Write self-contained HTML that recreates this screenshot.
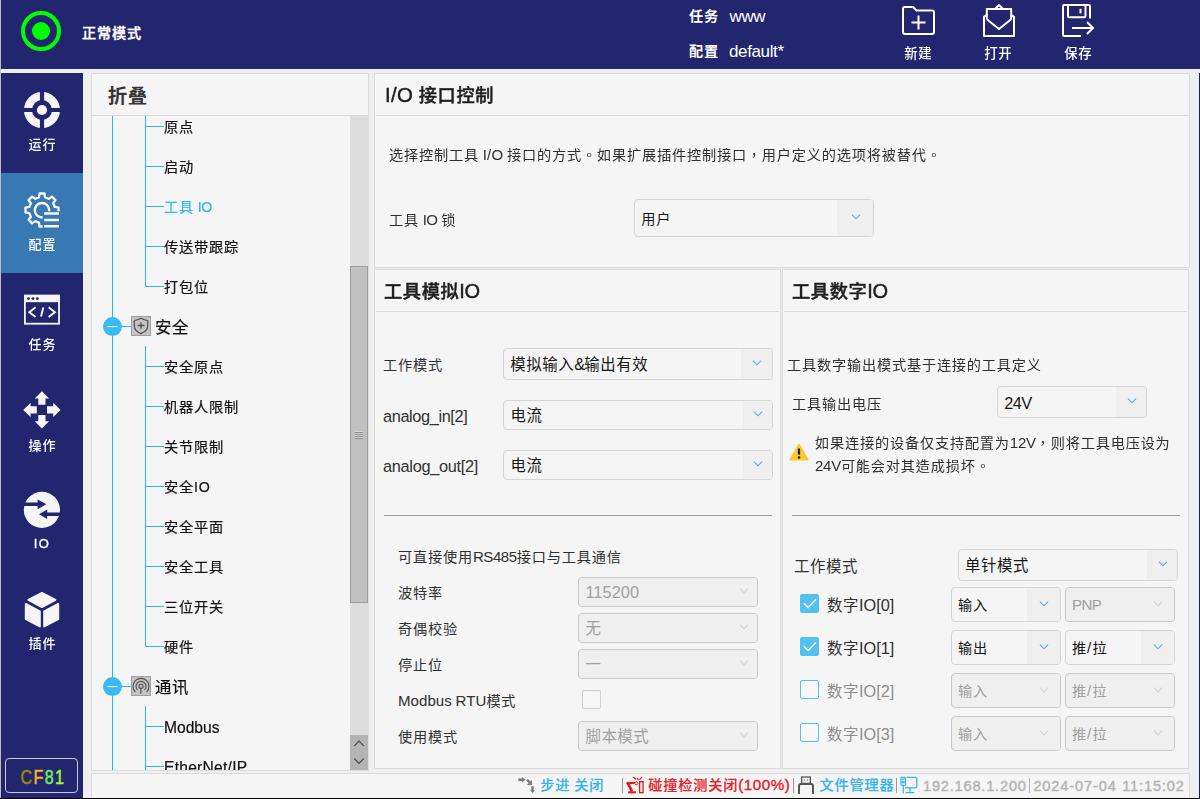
<!DOCTYPE html>
<html lang="zh-CN">
<head>
<meta charset="utf-8">
<title>I/O 接口控制</title>
<style>
*{box-sizing:border-box;margin:0;padding:0}
html,body{width:1200px;height:799px;overflow:hidden;background:#efefef}
body{position:relative;font-family:"Liberation Sans","Noto Sans CJK SC",sans-serif;color:#1c1c1c;font-size:15px}
.abs,.t,svg{position:absolute}
.t{white-space:nowrap;line-height:20px;height:20px}
.b{font-weight:bold}
.m{font-weight:500}
.w{color:#fff}
#top{left:0;top:0;width:1200px;height:69px;background:#21266f}
#side{left:1px;top:73px;width:82px;height:725px;background:#21266f}
#lstrip{left:0;top:0;width:1px;height:799px;background:#bdbdbd}
#rstrip{left:1199px;top:73px;width:1px;height:726px;background:#1a1d6c}
#bline{left:0;top:798px;width:1200px;height:1px;background:#000}
.panel{position:absolute;background:#f5f5f5;border:1px solid #dadada}
.hr{position:absolute;height:1px;background:#d9d9d9}
.nav{position:absolute;left:0;width:82px;height:100px}
.nav.sel{background:#3878b3}
.nav .t{left:0;width:82px;text-align:center;color:#fff;font-weight:500;font-size:13px;letter-spacing:1px;text-indent:1px;top:61.5px;will-change:transform}
.tl{position:absolute;background:#2cb5f1}
.ti{font-size:14.2px;letter-spacing:0.8px;left:164px;color:#111;-webkit-text-stroke:0.2px}
.lt{letter-spacing:-0.5px;margin-left:-1px}
.tg{font-size:16.4px;letter-spacing:0.6px;left:155px;line-height:22px;height:22px;color:#111;-webkit-text-stroke:0.2px}
.h{font-size:18.2px;letter-spacing:0.65px;font-weight:500;-webkit-text-stroke:0.45px;line-height:26px;height:26px;color:#1e1e1e}
.f11{font-size:14.2px;letter-spacing:0.8px;color:#303030}
.f12{font-size:15.4px;letter-spacing:0.6px;color:#303030}
.combo{position:absolute;border:1px solid #d5d5d5;border-radius:4px;background:#f5f5f5;overflow:hidden}
.combo .v{position:absolute;left:7px;top:50%;margin-top:-10.5px;line-height:22px;white-space:nowrap;color:#161616}
.c11{font-size:14.2px;letter-spacing:0.8px}
.c12{font-size:15.4px;letter-spacing:0.6px}
.combo .a{position:absolute;right:0;top:0;bottom:0;width:35px;background:#efefef}
.combo .a svg{left:50%;top:50%;margin:-3.8px 0 0 -4.3px}
.combo.dis{background:#efefef;border-color:#c8c8c8}
.combo.dis .v{color:#a0a0a0}
.cb{position:absolute;width:19px;height:19px;border:1px solid #55c1f2;border-radius:2px;background:#f7f7f7}
.cb.on{background:#55c1f2}
.cb.g{border-color:#cfcfcf}
.sb{font-size:14.2px;letter-spacing:0.8px;font-weight:500;-webkit-text-stroke:0.15px;line-height:20px}
.sn{font-size:14.6px;letter-spacing:0.75px;-webkit-text-stroke:0.4px;line-height:20px}
</style>
</head>
<body>
<div id="top" class="abs"></div>
<div id="lstrip" class="abs"></div>
<div id="side" class="abs"></div>
<div id="rstrip" class="abs"></div>
<svg style="left:19px;top:9px" width="44" height="44" viewBox="0 0 44 44"><circle cx="22" cy="22" r="18" fill="none" stroke="#00ff00" stroke-width="4"/><circle cx="22" cy="22" r="9" fill="#00ff00"/></svg>
<div class="t w m" style="left:82px;top:23.3px;font-size:14.2px;letter-spacing:0.8px;-webkit-text-stroke:0.35px;">正常模式</div>
<div class="t w b" style="left:689px;top:6px;font-size:14.2px;letter-spacing:0.8px;">任务</div>
<div class="t w" style="left:729.5px;top:7px;font-size:17px;letter-spacing:-0.4px;">www</div>
<div class="t w b" style="left:689px;top:41px;font-size:14.2px;letter-spacing:0.8px;">配置</div>
<div class="t w" style="left:729px;top:42px;font-size:17px;letter-spacing:-0.37px;">default*</div>
<svg style="left:901px;top:5px" width="35" height="31" viewBox="0 0 35 31"><path d="M3.5 2 H12 L15.5 5.5 H31 Q33 5.5 33 7.5 V27 Q33 29 31 29 H4 Q2 29 2 27 V3.5 Q2 2 3.5 2 Z" fill="none" stroke="#fff" stroke-width="2" stroke-linejoin="round"/><path d="M10.5 17.5 H24.5 M17.5 10.5 V24.5" stroke="#fff" stroke-width="2" fill="none"/></svg>
<div class="t w m" style="left:888px;width:60px;text-align:center;top:43.5px;font-size:13.4px;letter-spacing:0.6px;text-indent:0.6px;will-change:transform">新建</div>
<svg style="left:982px;top:3px" width="34" height="35" viewBox="0 0 34 35"><path d="M2 13.8 V33 H32 V13.8" fill="none" stroke="#fff" stroke-width="2" stroke-linejoin="round"/><path d="M2 13.8 L4.5 12 M32 13.8 L29.5 12" fill="none" stroke="#fff" stroke-width="2" stroke-linecap="round"/><path d="M4.8 16.3 L17 26 L29.2 16.3" fill="none" stroke="#fff" stroke-width="2" stroke-linejoin="round"/><path d="M4.8 16.5 V6 H29.2 V16.5" fill="none" stroke="#fff" stroke-width="2" stroke-linejoin="round"/><path d="M13 6 L17 2 L21 6" fill="none" stroke="#fff" stroke-width="2" stroke-linejoin="round"/></svg>
<div class="t w m" style="left:968px;width:60px;text-align:center;top:43.5px;font-size:13.4px;letter-spacing:0.6px;text-indent:0.6px;will-change:transform">打开</div>
<svg style="left:1061.2px;top:2.7px" width="35" height="35" viewBox="0 0 35 35"><path d="M20 33 H3 Q2 33 2 32 V3 Q2 2 3 2 H28 Q29 2 29 3 V15.5" fill="none" stroke="#fff" stroke-width="2" stroke-linejoin="round"/><path d="M7 2 V13 Q7 14.3 8.3 14.3 H23.2 Q24.5 14.3 24.5 13 V2" fill="none" stroke="#fff" stroke-width="2"/><path d="M19.5 5.8 V10.4" stroke="#fff" stroke-width="2"/><path d="M11 25 H32 M26 19 L32 25 L26 31" fill="none" stroke="#fff" stroke-width="2"/></svg>
<div class="t w m" style="left:1048px;width:60px;text-align:center;top:43.5px;font-size:13.4px;letter-spacing:0.6px;text-indent:0.6px;will-change:transform">保存</div>
<div id="sidein" class="abs" style="left:1px;top:73px;width:82px;height:725px">
<div class="nav" style="top:0px"><svg style="left:23px;top:19px" width="36" height="36" viewBox="0 0 36 36"><circle cx="18" cy="18" r="14" fill="none" stroke="#f5f5f5" stroke-width="8"/><circle cx="18" cy="18" r="5.1" fill="#f5f5f5"/><path d="M18 0 V10.5 M18 25.5 V36 M0 18 H10.5 M25.5 18 H36" stroke="#21266f" stroke-width="4.2"/></svg><div class="t">运行</div></div>
<div class="nav sel" style="top:100px"><svg style="left:21px;top:17px" width="40" height="40" viewBox="0 0 40 40"><defs><clipPath id="gc"><path d="M0 0 H40 V21.2 H20.6 V40 H0 Z"/></clipPath></defs><g clip-path="url(#gc)" fill="none" stroke="#f7f7f7"><path d="M16.97 7.36L17.53 3.48L22.47 3.48L23.03 7.36A13.0 13.0 0 0 1 26.79 8.92L29.93 6.58L33.42 10.07L31.08 13.21A13.0 13.0 0 0 1 32.64 16.97L36.52 17.53L36.52 22.47L32.64 23.03A13.0 13.0 0 0 1 31.08 26.79L33.42 29.93L29.93 33.42L26.79 31.08A13.0 13.0 0 0 1 23.03 32.64L22.47 36.52L17.53 36.52L16.97 32.64A13.0 13.0 0 0 1 13.21 31.08L10.07 33.42L6.58 29.93L8.92 26.79A13.0 13.0 0 0 1 7.36 23.03L3.48 22.47L3.48 17.53L7.36 16.97A13.0 13.0 0 0 1 8.92 13.21L6.58 10.07L10.07 6.58L13.21 8.92A13.0 13.0 0 0 1 16.97 7.36Z" stroke-width="2.3" stroke-linejoin="round"/><circle cx="20" cy="20.3" r="7.2" stroke-width="2.5"/></g><path d="M22.2 23.6 H37 M22.2 29.9 H37 M22.2 36.2 H37" stroke="#f7f7f7" stroke-width="2.5" fill="none"/></svg><div class="t">配置</div></div>
<div class="nav" style="top:200px"><svg style="left:22px;top:20px" width="38" height="32" viewBox="0 0 38 32"><rect x="1.9" y="2.7" width="34.1" height="28" fill="none" stroke="#f5f5f5" stroke-width="1.8"/><rect x="1" y="1.8" width="35.9" height="7.4" fill="#f5f5f5"/><circle cx="5.5" cy="5.6" r="1.45" fill="#21266f"/><circle cx="9.9" cy="5.6" r="1.45" fill="#21266f"/><circle cx="14.3" cy="5.6" r="1.45" fill="#21266f"/><path d="M12.6 14.3 L6.3 19.2 L12.6 24.1 M25.6 14.3 L31.9 19.2 L25.6 24.1 M20.3 14.6 L18 23.4" fill="none" stroke="#f5f5f5" stroke-width="1.9"/></svg><div class="t">任务</div></div>
<div class="nav" style="top:300px"><svg style="left:22px;top:18px" width="38" height="38" viewBox="0 0 38 38"><g fill="#f5f5f5"><path d="M18.9 0.3 L26.1 7.6 H22.5 V13.7 H15.3 V7.6 H11.7 Z"/><path d="M18.9 37.5 L26.1 30.2 H22.5 V24.1 H15.3 V30.2 H11.7 Z"/><path d="M0.2 18.9 L7.6 11.7 V15.3 H13.8 V22.5 H7.6 V26.1 Z"/><path d="M37.6 18.9 L30.2 11.7 V15.3 H24 V22.5 H30.2 V26.1 Z"/></g></svg><div class="t" style="top:62.5px">操作</div></div>
<div class="nav" style="top:400px"><svg style="left:22px;top:18px" width="38" height="38" viewBox="0 0 38 38"><circle cx="18.9" cy="18.9" r="18.1" fill="#f5f5f5"/><g fill="#21266f"><path d="M0 11.4 H14.6 V8.6 L23.4 13.3 L14.6 18.2 V15.1 H0 Z"/><path d="M38 21.4 H24.2 V18.5 L16 23.3 L24.2 28.1 V25.1 H38 Z"/></g></svg><div class="t" style="font-weight:normal;-webkit-text-stroke:0.35px #fff;letter-spacing:1.3px;text-indent:0;top:61px">IO</div></div>
<div class="nav" style="top:500px"><svg style="left:22px;top:18px" width="38" height="38" viewBox="0 0 38 38"><g fill="#f5f5f5" stroke="#f5f5f5" stroke-width="2" stroke-linejoin="round"><path d="M18.9 2 L32.4 8.8 L18.9 16 L5.4 8.8 Z"/><path d="M2.8 13 L16.8 20.4 V35.4 L2.8 28 Z"/><path d="M35.2 13 L21.2 20.4 V35.4 L35.2 28 Z"/></g></svg><div class="t" style="top:61px">插件</div></div>
<div class="abs" style="left:4px;top:685px;width:73px;height:35px;border:1px solid #c9c9d6;border-radius:4px"></div>
<div class="t" style="left:4px;width:73px;text-align:center;top:690px;font-size:19.6px;letter-spacing:1.7px;text-indent:3.4px;-webkit-text-stroke:0.5px;line-height:28px;height:28px;transform:scaleX(0.82)"><span style="color:#9e8a00">C</span><span style="color:#ffb31a">F</span><span style="color:#66f266">8</span><span style="color:#a3f533">1</span></div>
</div>
<div class="panel" style="left:91px;top:73px;width:278px;height:698px;overflow:hidden">
</div>
<div class="abs" id="tree" style="left:0;top:116px;width:350px;height:654px;overflow:hidden"><div class="abs" style="left:0;top:-116px;width:350px;height:799px">
<div class="tl" style="left:112px;top:116px;width:1px;height:660px"></div>
<div class="tl" style="left:145px;top:116px;width:1px;height:171px"></div>
<div class="tl" style="left:145px;top:126px;width:19px;height:1px"></div>
<div class="t ti" style="left:164px;top:117px;">原点</div>
<div class="tl" style="left:145px;top:166px;width:19px;height:1px"></div>
<div class="t ti" style="left:164px;top:157px;">启动</div>
<div class="tl" style="left:145px;top:206px;width:19px;height:1px"></div>
<div class="t ti" style="left:164px;top:197px;color:#2cb5f1;">工具 <span class="lt">IO</span></div>
<div class="tl" style="left:145px;top:246px;width:19px;height:1px"></div>
<div class="t ti" style="left:164px;top:237px;">传送带跟踪</div>
<div class="tl" style="left:145px;top:286px;width:19px;height:1px"></div>
<div class="t ti" style="left:164px;top:277px;">打包位</div>
<div class="tl" style="left:112px;top:326px;width:19px;height:1px"></div>
<svg style="left:103px;top:316.5px" width="20" height="20" viewBox="0 0 20 20"><circle cx="9.5" cy="9.6" r="9.5" fill="#3bb9f1"/><path d="M4.3 9.6 H14.7" stroke="#fff" stroke-width="1" opacity="0.9"/></svg>
<div class="abs" style="left:131px;top:316px;width:20px;height:20px;background:#c3c3c3;border:1px solid #9e9e9e"></div>
<svg style="left:131px;top:316px" width="20" height="20" viewBox="0 0 20 20"><path d="M10 2.3 Q13.4 4.3 16.7 4.5 V10 Q16.5 15 10 17.6 Q3.5 15 3.3 10 V4.5 Q6.6 4.3 10 2.3 Z" fill="none" stroke="#4c4c4c" stroke-width="1.15" stroke-linejoin="round"/><path d="M6.6 9.5 H13.4 M10 6.2 V12.8" stroke="#4c4c4c" stroke-width="1.3"/></svg>
<div class="t tg" style="left:155px;top:316.2px;line-height:22px;height:22px;">安全</div>
<div class="tl" style="left:145px;top:346px;width:1px;height:301px"></div>
<div class="tl" style="left:145px;top:366px;width:19px;height:1px"></div>
<div class="t ti" style="left:164px;top:357px;">安全原点</div>
<div class="tl" style="left:145px;top:406px;width:19px;height:1px"></div>
<div class="t ti" style="left:164px;top:397px;">机器人限制</div>
<div class="tl" style="left:145px;top:446px;width:19px;height:1px"></div>
<div class="t ti" style="left:164px;top:437px;">关节限制</div>
<div class="tl" style="left:145px;top:486px;width:19px;height:1px"></div>
<div class="t ti" style="left:164px;top:477px;">安全IO</div>
<div class="tl" style="left:145px;top:526px;width:19px;height:1px"></div>
<div class="t ti" style="left:164px;top:517px;">安全平面</div>
<div class="tl" style="left:145px;top:566px;width:19px;height:1px"></div>
<div class="t ti" style="left:164px;top:557px;">安全工具</div>
<div class="tl" style="left:145px;top:606px;width:19px;height:1px"></div>
<div class="t ti" style="left:164px;top:597px;">三位开关</div>
<div class="tl" style="left:145px;top:646px;width:19px;height:1px"></div>
<div class="t ti" style="left:164px;top:637px;">硬件</div>
<div class="tl" style="left:112px;top:686px;width:19px;height:1px"></div>
<svg style="left:103px;top:676.5px" width="20" height="20" viewBox="0 0 20 20"><circle cx="9.5" cy="9.6" r="9.5" fill="#3bb9f1"/><path d="M4.3 9.6 H14.7" stroke="#fff" stroke-width="1" opacity="0.9"/></svg>
<div class="abs" style="left:131px;top:676px;width:20px;height:20px;background:#c3c3c3;border:1px solid #9e9e9e"></div>
<svg style="left:131px;top:676px" width="20" height="20" viewBox="0 0 20 20"><g fill="none" stroke="#505050"><circle cx="10" cy="10.3" r="2.1" stroke-width="1.1"/><path d="M9.9 12.6 V17.7" stroke-width="1.1"/><path d="M6.5 13.9 A5 5 0 1 1 13.5 13.9" stroke-width="1.1"/><path d="M4.3 16 A8 8 0 1 1 15.7 16" stroke-width="1.1"/></g></svg>
<div class="t tg" style="left:155px;top:676.2px;line-height:22px;height:22px;">通讯</div>
<div class="tl" style="left:145px;top:706px;width:1px;height:74px"></div>
<div class="tl" style="left:145px;top:726px;width:19px;height:1px"></div>
<div class="t ti" style="left:164px;top:717.8px;"><span style="font-size:1.1em;line-height:0;letter-spacing:0px">Modbus</span></div>
<div class="tl" style="left:145px;top:766px;width:19px;height:1px"></div>
<div class="t ti" style="left:164px;top:757.8px;"><span style="font-size:1.1em;line-height:0;letter-spacing:0.25px">EtherNet/IP</span></div>
</div></div>
<div class="t b" style="left:107.7px;top:83px;font-size:19.5px;letter-spacing:0.5px;line-height:26px;height:26px;color:#363636;">折叠</div>
<div class="hr" style="left:92px;top:115px;width:276px"></div>
<div class="abs" style="left:350px;top:116px;width:19px;height:654px;background:#dcdcdc"></div>
<div class="abs" style="left:350px;top:266px;width:18px;height:337px;background:#c0c0c0;border:1px solid #9c9c9c"></div>
<div class="abs" style="left:350px;top:735px;width:18px;height:35px;background:#b4b4b4"></div>
<svg style="left:350px;top:735px" width="18" height="35" viewBox="0 0 18 35"><path d="M4.3 10.8 L9 6 L13.7 10.8 M4.3 23.5 L9 28.3 L13.7 23.5" fill="none" stroke="#4a4a4a" stroke-width="1.2"/></svg>
<svg style="left:355px;top:431px" width="8" height="8" viewBox="0 0 8 8" shape-rendering="crispEdges"><g fill="#d6d6d6"><rect x="0" y="0" width="8" height="1"/><rect x="0" y="2" width="8" height="1"/><rect x="0" y="4" width="8" height="1"/><rect x="0" y="6" width="8" height="1"/></g><g fill="#8c8c8c"><rect x="0" y="1" width="8" height="1"/><rect x="0" y="3" width="8" height="1"/><rect x="0" y="5" width="8" height="1"/><rect x="0" y="7" width="8" height="1"/></g></svg>
<div class="panel" style="left:374px;top:73px;width:816px;height:195px"></div>
<div class="hr" style="left:376px;top:115px;width:812px"></div>
<div class="t h" style="left:385.1px;top:83px;line-height:26px;height:26px;will-change:transform;"><span style="font-size:1.12em;line-height:0;letter-spacing:0.3px;word-spacing:-3.8px;">I/O</span> 接口控制</div>
<div class="t f11" lang="zh-TW" style="left:389px;top:145.3px;will-change:transform;font-family:'Liberation Sans','Noto Sans CJK TC',sans-serif;word-spacing:-1px;">选择控制工具 <span style="font-size:1.06em;line-height:0;letter-spacing:0.2px;">I/O</span> 接口的方式。如果扩展插件控制接口，用户定义的选项将被替代。</div>
<div class="t f11" style="left:389px;top:210px;will-change:transform;word-spacing:-1px;">工具 <span style="font-size:1.06em;line-height:0;letter-spacing:-0.6px;">IO</span> 锁</div>
<div class="combo" style="left:634px;top:199px;width:240px;height:38px"><div class="a" style="width:36px"><svg width="10" height="6" viewBox="0 0 10 6"><path d="M0.9 0.7 L5 4.8 L9.1 0.7" fill="none" stroke="#55a9f2" stroke-width="1.15"/></svg></div><div class="v c11" style="left:6.3px">用户</div></div>
<div class="panel" style="left:374px;top:269px;width:407px;height:500px"></div>
<div class="hr" style="left:376px;top:311px;width:403px"></div>
<div class="t h" style="left:384.2px;top:278.5px;line-height:26px;height:26px;will-change:transform;">工具模拟<span style="font-size:1.1em;line-height:0;letter-spacing:-0.4px;">IO</span></div>
<div class="t f11" style="left:383px;top:355.3px;">工作模式</div>
<div class="combo" style="left:503px;top:348px;width:270px;height:32px"><div class="a" style="width:31px"><svg width="10" height="6" viewBox="0 0 10 6"><path d="M0.9 0.7 L5 4.8 L9.1 0.7" fill="none" stroke="#55a9f2" stroke-width="1.15"/></svg></div><div class="v c12" style="left:6.3px">模拟输入<span style="font-size:1.06em;line-height:0;letter-spacing:-1px;">&amp;</span>输出有效</div></div>
<div class="t f12" style="left:383px;top:406.6px;"><span style="font-size:1.06em;line-height:0;letter-spacing:-0.38px;">analog_in[2]</span></div>
<div class="combo" style="left:503px;top:400px;width:270px;height:30px"><div class="a" style="width:29px"><svg width="10" height="6" viewBox="0 0 10 6"><path d="M0.9 0.7 L5 4.8 L9.1 0.7" fill="none" stroke="#55a9f2" stroke-width="1.15"/></svg></div><div class="v c12" style="left:6.5px;margin-top:-10px">电流</div></div>
<div class="t f12" style="left:383px;top:456.6px;"><span style="font-size:1.06em;line-height:0;letter-spacing:-0.3px;">analog_out[2]</span></div>
<div class="combo" style="left:503px;top:450px;width:270px;height:30px"><div class="a" style="width:29px"><svg width="10" height="6" viewBox="0 0 10 6"><path d="M0.9 0.7 L5 4.8 L9.1 0.7" fill="none" stroke="#55a9f2" stroke-width="1.15"/></svg></div><div class="v c12" style="left:6.5px;margin-top:-10px">电流</div></div>
<div class="hr" style="left:384px;top:515px;width:388px;background:#9a9a9a"></div>
<div class="t f11" style="left:398px;top:546.5px;">可直接使用<span style="font-size:1.06em;line-height:0;letter-spacing:-0.45px;">RS485</span>接口与工具通信</div>
<div class="t f11" style="left:398px;top:583.3px;">波特率</div>
<div class="combo dis" style="left:578px;top:577px;width:180px;height:30px"><div class="a" style="width:28px"><svg width="10" height="6" viewBox="0 0 10 6"><path d="M0.9 0.7 L5 4.8 L9.1 0.7" fill="none" stroke="#d2d2d2" stroke-width="1.15"/></svg></div><div class="v c12" style="left:6.4px;margin-top:-9.7px"><span style="font-size:1.06em;line-height:0;letter-spacing:0.1px;">115200</span></div></div>
<div class="t f11" style="left:398px;top:619.3px;">奇偶校验</div>
<div class="combo dis" style="left:578px;top:613px;width:180px;height:30px"><div class="a" style="width:28px"><svg width="10" height="6" viewBox="0 0 10 6"><path d="M0.9 0.7 L5 4.8 L9.1 0.7" fill="none" stroke="#d2d2d2" stroke-width="1.15"/></svg></div><div class="v c12" style="left:6.4px;margin-top:-9.7px">无</div></div>
<div class="t f11" style="left:398px;top:655.3px;">停止位</div>
<div class="combo dis" style="left:578px;top:649px;width:180px;height:30px"><div class="a" style="width:28px"><svg width="10" height="6" viewBox="0 0 10 6"><path d="M0.9 0.7 L5 4.8 L9.1 0.7" fill="none" stroke="#d2d2d2" stroke-width="1.15"/></svg></div><div class="v c12" style="left:6.4px;margin-top:-9.7px">一</div></div>
<div class="t f11" style="left:398px;top:691.3px;"><span style="font-size:1.06em;line-height:0;letter-spacing:0.05px;word-spacing:-0.5px;">Modbus RTU</span>模式</div>
<div class="cb g" style="left:582px;top:690px;width:19px;height:19px"></div>
<div class="t f11" style="left:398px;top:727.3px;">使用模式</div>
<div class="combo dis" style="left:578px;top:721px;width:180px;height:30px"><div class="a" style="width:28px"><svg width="10" height="6" viewBox="0 0 10 6"><path d="M0.9 0.7 L5 4.8 L9.1 0.7" fill="none" stroke="#d2d2d2" stroke-width="1.15"/></svg></div><div class="v c12" style="left:6.4px;margin-top:-9.7px">脚本模式</div></div>
<div class="panel" style="left:782px;top:269px;width:407px;height:500px"></div>
<div class="hr" style="left:784px;top:311px;width:403px"></div>
<div class="t h" style="left:792px;top:278.5px;line-height:26px;height:26px;will-change:transform;">工具数字<span style="font-size:1.1em;line-height:0;letter-spacing:-0.4px;">IO</span></div>
<div class="t f11" style="left:787.3px;top:354.8px;will-change:transform;">工具数字输出模式基于连接的工具定义</div>
<div class="t f11" style="left:792.3px;top:394px;will-change:transform;">工具输出电压</div>
<div class="combo" style="left:997px;top:386px;width:150px;height:32px"><div class="a" style="width:30px"><svg width="10" height="6" viewBox="0 0 10 6"><path d="M0.9 0.7 L5 4.8 L9.1 0.7" fill="none" stroke="#55a9f2" stroke-width="1.15"/></svg></div><div class="v c12" style="left:6.2px;margin-top:-9.5px"><span style="font-size:1.06em;line-height:0;letter-spacing:-0.5px;">24V</span></div></div>
<svg style="left:789px;top:443.3px" width="20" height="18" viewBox="0 0 20 18"><path d="M10 1.4 L18.8 16.6 H1.2 Z" fill="#fdc830" stroke="#fdc830" stroke-width="1.6" stroke-linejoin="round"/><path d="M10 5.6 V11.6" stroke="#1a1a1a" stroke-width="2.2"/><circle cx="10" cy="14.4" r="1.25" fill="#1a1a1a"/></svg>
<div class="t f11" lang="zh-TW" style="left:815px;top:432.6px;will-change:transform;font-family:'Liberation Sans','Noto Sans CJK TC',sans-serif;">如果连接的设备仅支持配置为<span style="font-size:1.06em;line-height:0;letter-spacing:-0.3px;">12V</span>，则将工具电压设为</div>
<div class="t f11" lang="zh-TW" style="left:815px;top:456px;will-change:transform;font-family:'Liberation Sans','Noto Sans CJK TC',sans-serif;"><span style="font-size:1.06em;line-height:0;letter-spacing:-0.3px;">24V</span>可能会对其造成损坏。</div>
<div class="hr" style="left:792px;top:515px;width:388px;background:#9a9a9a"></div>
<div class="t f12" style="left:794px;top:557px;">工作模式</div>
<div class="combo" style="left:958px;top:549px;width:220px;height:32px"><div class="a" style="width:30px"><svg width="10" height="6" viewBox="0 0 10 6"><path d="M0.9 0.7 L5 4.8 L9.1 0.7" fill="none" stroke="#55a9f2" stroke-width="1.15"/></svg></div><div class="v c12" style="left:6px">单针模式</div></div>
<div class="cb on" style="left:800px;top:594px"><svg style="left:1px;top:2px" width="16" height="13" viewBox="0 0 16 13"><path d="M1.8 6.2 L6.2 10.5 L14 2.3" fill="none" stroke="#fff" stroke-width="1.4"/></svg></div>
<div class="t f12" style="left:827px;top:596px;">数字<span style="font-size:1.06em;line-height:0;letter-spacing:0px;">IO[0]</span></div>
<div class="combo" style="left:951px;top:587px;width:110px;height:35px"><div class="a" style="width:33px"><svg width="10" height="6" viewBox="0 0 10 6"><path d="M0.9 0.7 L5 4.8 L9.1 0.7" fill="none" stroke="#55a9f2" stroke-width="1.15"/></svg></div><div class="v c11" style="left:6px">输入</div></div>
<div class="combo dis" style="left:1065px;top:587px;width:110px;height:35px"><div class="a" style="width:33px"><svg width="10" height="6" viewBox="0 0 10 6"><path d="M0.9 0.7 L5 4.8 L9.1 0.7" fill="none" stroke="#d2d2d2" stroke-width="1.15"/></svg></div><div class="v c11" style="left:6px"><span style="font-size:1.06em;line-height:0;letter-spacing:-0.6px;">PNP</span></div></div>
<div class="cb on" style="left:800px;top:637px"><svg style="left:1px;top:2px" width="16" height="13" viewBox="0 0 16 13"><path d="M1.8 6.2 L6.2 10.5 L14 2.3" fill="none" stroke="#fff" stroke-width="1.4"/></svg></div>
<div class="t f12" style="left:827px;top:639px;">数字<span style="font-size:1.06em;line-height:0;letter-spacing:0px;">IO[1]</span></div>
<div class="combo" style="left:951px;top:630px;width:110px;height:35px"><div class="a" style="width:33px"><svg width="10" height="6" viewBox="0 0 10 6"><path d="M0.9 0.7 L5 4.8 L9.1 0.7" fill="none" stroke="#55a9f2" stroke-width="1.15"/></svg></div><div class="v c11" style="left:6px">输出</div></div>
<div class="combo" style="left:1065px;top:630px;width:110px;height:35px"><div class="a" style="width:33px"><svg width="10" height="6" viewBox="0 0 10 6"><path d="M0.9 0.7 L5 4.8 L9.1 0.7" fill="none" stroke="#55a9f2" stroke-width="1.15"/></svg></div><div class="v c11" style="left:6px">推<span style="font-size:1.06em;line-height:0;letter-spacing:1.3px;">/</span>拉</div></div>
<div class="cb" style="left:800px;top:680px"></div>
<div class="t f12" style="left:827px;top:682px;color:#8e8e8e;">数字<span style="font-size:1.06em;line-height:0;letter-spacing:0px;">IO[2]</span></div>
<div class="combo dis" style="left:951px;top:673px;width:110px;height:35px"><div class="a" style="width:33px"><svg width="10" height="6" viewBox="0 0 10 6"><path d="M0.9 0.7 L5 4.8 L9.1 0.7" fill="none" stroke="#d2d2d2" stroke-width="1.15"/></svg></div><div class="v c11" style="left:6px">输入</div></div>
<div class="combo dis" style="left:1065px;top:673px;width:110px;height:35px"><div class="a" style="width:33px"><svg width="10" height="6" viewBox="0 0 10 6"><path d="M0.9 0.7 L5 4.8 L9.1 0.7" fill="none" stroke="#d2d2d2" stroke-width="1.15"/></svg></div><div class="v c11" style="left:6px">推<span style="font-size:1.06em;line-height:0;letter-spacing:1.3px;">/</span>拉</div></div>
<div class="cb" style="left:800px;top:723px"></div>
<div class="t f12" style="left:827px;top:725px;color:#8e8e8e;">数字<span style="font-size:1.06em;line-height:0;letter-spacing:0px;">IO[3]</span></div>
<div class="combo dis" style="left:951px;top:716px;width:110px;height:35px"><div class="a" style="width:33px"><svg width="10" height="6" viewBox="0 0 10 6"><path d="M0.9 0.7 L5 4.8 L9.1 0.7" fill="none" stroke="#d2d2d2" stroke-width="1.15"/></svg></div><div class="v c11" style="left:6px">输入</div></div>
<div class="combo dis" style="left:1065px;top:716px;width:110px;height:35px"><div class="a" style="width:33px"><svg width="10" height="6" viewBox="0 0 10 6"><path d="M0.9 0.7 L5 4.8 L9.1 0.7" fill="none" stroke="#d2d2d2" stroke-width="1.15"/></svg></div><div class="v c11" style="left:6px">推<span style="font-size:1.06em;line-height:0;letter-spacing:1.3px;">/</span>拉</div></div>
<div class="panel" style="left:91px;top:773px;width:1099px;height:25px;border-bottom:none"></div>
<svg style="left:517px;top:776px" width="20" height="18" viewBox="0 0 20 18"><g fill="#7c7c7c"><path d="M1.3 2.6 H5 V1.1 L8.4 3.75 L5 6.4 V4.9 H1.3 Z"/><path d="M9.2 4.4 L10.8 2.8 L13.4 5.4 L15 3.8 V8.9 H9.9 L11.6 7.2 Z"/><path d="M14.3 10.2 H16.8 V14.2 H18.1 L15.55 17.1 L13 14.2 H14.3 Z"/></g></svg>
<div class="t sb" style="left:540.3px;top:775px;color:#38b3ee;word-spacing:-0.8px;">步进 关闭</div>
<div class="abs" style="left:622px;top:778px;width:1px;height:15px;background:#969696"></div>
<svg style="left:626px;top:776px" width="20" height="18" viewBox="0 0 20 18"><g fill="none" stroke="#e61414"><path d="M2.2 16.3 H9.8" stroke-width="2.1"/><path d="M6 15.4 L2 7.5" stroke-width="2.7"/><path d="M1.9 7.2 L9 6.8" stroke-width="2"/><circle cx="10.4" cy="7.3" r="1.5" stroke-width="1" fill="#f5f5f5"/><rect x="13.65" y="5.65" width="3.4" height="11" stroke-width="1.3"/><path d="M7.3 1.3 L9.7 3.1 M11.3 2.2 L12 3.8 M15.7 1.3 L13.7 3.4" stroke-width="1.2" stroke-linecap="round"/></g><circle cx="1.9" cy="7.3" r="1.5" fill="#e61414"/></svg>
<div class="t sb" style="left:648.2px;top:775px;color:#e8202a;">碰撞检测关闭<span style="font-size:1.06em;line-height:0;letter-spacing:0.55px;font-size:15.2px;-webkit-text-stroke:0.4px;">(100%)</span></div>
<div class="abs" style="left:793px;top:778px;width:1px;height:15px;background:#969696"></div>
<svg style="left:797px;top:776px" width="18" height="18" viewBox="0 0 18 18"><rect x="4.65" y="1" width="8.7" height="6.4" fill="#efefef" stroke="#555" stroke-width="1.3"/><path d="M2 17.3 V9.9 Q2 8 3.9 8 H14.1 Q16 8 16 9.9 V17.3" fill="none" stroke="#555" stroke-width="2" stroke-linecap="round"/><rect x="6.9" y="3.3" width="0.9" height="1.5" fill="#777"/><rect x="10.1" y="3.3" width="0.9" height="1.5" fill="#777"/></svg>
<div class="t sb" style="left:819.6px;top:775px;color:#38b3ee;">文件管理器</div>
<div class="abs" style="left:896px;top:778px;width:1px;height:15px;background:#969696"></div>
<svg style="left:900px;top:776px" width="18" height="18" viewBox="0 0 18 18"><g fill="none" stroke="#38b3ee" stroke-width="1.25" stroke-linecap="round"><rect x="0.95" y="1.3" width="4.5" height="8" rx="1"/><path d="M2.4 3 H4 M2.4 5.3 V6.7 H4 V5.3"/><path d="M3.3 9.4 V16.9"/><path d="M7.2 1.45 H15.5 Q16.8 1.45 16.8 2.75 V10.6 Q16.8 11.9 15.5 11.9 H5.6"/><path d="M10 12 V16.4 M6 16.5 H13.9"/></g></svg>
<div class="t sn" style="left:923px;top:776px;color:#b3b3b3;letter-spacing:0.8px;">192.168.1.200</div>
<div class="abs" style="left:1029px;top:778px;width:1px;height:15px;background:#b0b0b0"></div>
<div class="t sn" style="left:1033.4px;top:776px;color:#b3b3b3;letter-spacing:0.86px;word-spacing:0.6px;">2024-07-04 11:15:02</div>
<div id="bline" class="abs"></div>
</body>
</html>
